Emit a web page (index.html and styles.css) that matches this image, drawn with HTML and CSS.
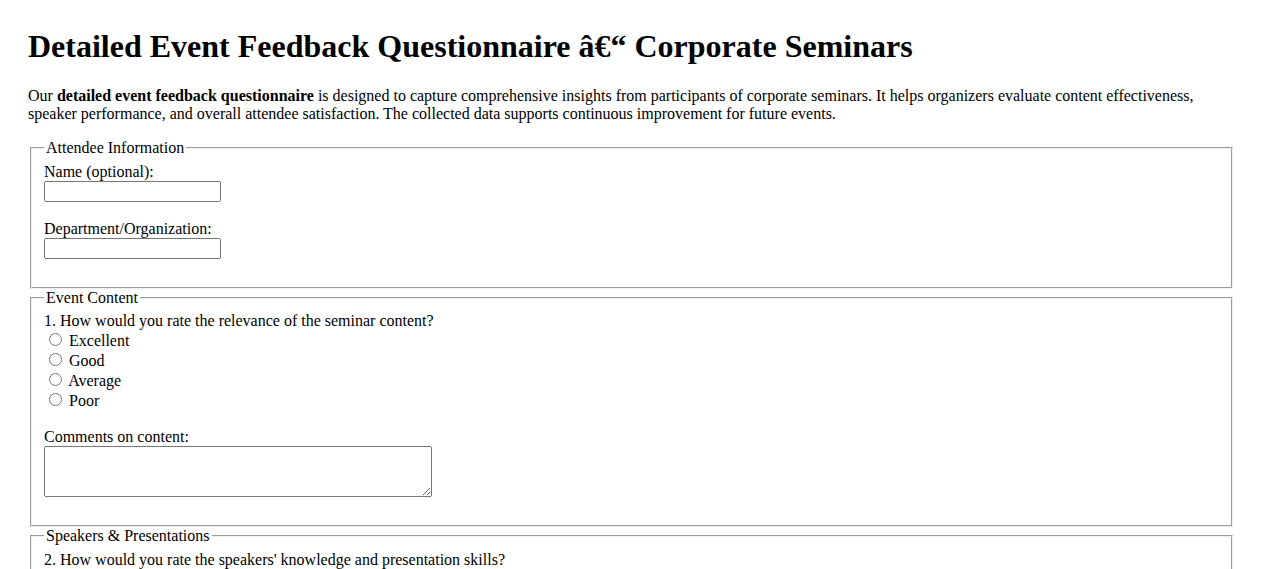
FILE: index.html
```html
<!DOCTYPE html>
<html lang="en">
<head>
<meta charset="utf-8">
<title>Detailed Event Feedback Questionnaire</title>
<link rel="stylesheet" href="styles.css">
</head>
<body>
<h1 class="title">Detailed Event Feedback Questionnaire &acirc;&euro;&ldquo; Corporate Seminars</h1>
<p class="intro">Our <strong>detailed event feedback questionnaire</strong> is designed to capture comprehensive insights from participants of corporate seminars. It helps organizers evaluate content effectiveness, speaker performance, and overall attendee satisfaction. The collected data supports continuous improvement for future events.</p>
<form class="survey">
<fieldset class="section">
<legend>Attendee Information</legend>
<label for="name">Name (optional):</label><br>
<input class="field" type="text" id="name" name="name"><br><br>
<label for="dept">Department/Organization:</label><br>
<input class="field" type="text" id="dept" name="dept"><br><br>
</fieldset>
<fieldset class="section">
<legend>Event Content</legend>
1. How would you rate the relevance of the seminar content?<br>
<input type="radio" name="content" id="c1"> <label for="c1">Excellent</label><br>
<input type="radio" name="content" id="c2"> <label for="c2">Good</label><br>
<input type="radio" name="content" id="c3"> <label for="c3">Average</label><br>
<input type="radio" name="content" id="c4"> <label for="c4">Poor</label><br><br>
<label for="ccom">Comments on content:</label><br>
<textarea class="comments" id="ccom" name="ccom"></textarea><br><br>
</fieldset>
<fieldset class="section">
<legend>Speakers &amp; Presentations</legend>
2. How would you rate the speakers' knowledge and presentation skills?<br>
<input type="radio" name="speak" id="s1"> <label for="s1">Excellent</label><br>
<input type="radio" name="speak" id="s2"> <label for="s2">Good</label><br>
<input type="radio" name="speak" id="s3"> <label for="s3">Average</label><br>
<input type="radio" name="speak" id="s4"> <label for="s4">Poor</label><br><br>
<label for="scom">Comments on speakers:</label><br>
<textarea class="comments" id="scom" name="scom"></textarea><br><br>
</fieldset>
</form>
</body>
</html>
```
FILE: styles.css
```css
html, body {
  background: #ffffff;
}
body {
  margin: 0;
  padding: 28px;
  font-family: "Liberation Serif", "Times New Roman", serif;
  font-size: 16px;
  color: #000000;
}
.title {
  margin: 0 0 22px 0;
  font-size: 32px;
  font-weight: bold;
}
.intro {
  margin: 0 0 16px 0;
}
.survey {
  margin: 0;
}
.section {
  margin: 0 2px;
}
.field {
  box-sizing: border-box;
  width: 177px;
  height: 21px;
}
.comments {
  box-sizing: border-box;
  width: 388px;
  height: 51px;
  vertical-align: bottom;
}
```
